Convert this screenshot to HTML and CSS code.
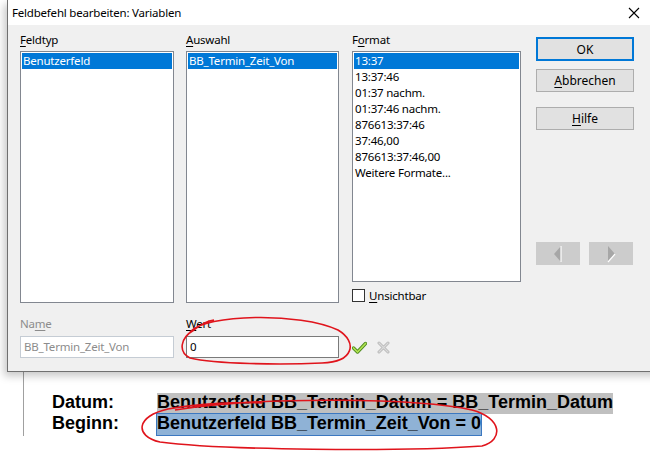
FILE: index.html
```html
<!DOCTYPE html>
<html lang="de">
<head>
    <meta charset="UTF-8">
    <title>Feldbefehl bearbeiten: Variablen</title>
    <link rel="stylesheet" href="styles.css">
</head>
<body>
    <div class="dialog">
        <div class="titlebar">
            <span class="title">Feldbefehl bearbeiten: Variablen</span>
            <svg class="close" width="12" height="12" viewBox="0 0 12 12">
                <path d="M1 1 L11 11 M11 1 L1 11" stroke="#000" stroke-width="1.1"/>
            </svg>
        </div>

        <div class="dialog-body">
            <div class="top-row">
                <div class="col col-type">
                    <div class="label"><u>F</u>eldtyp</div>
                    <div class="listbox tall">
                        <div class="item selected">Benutzerfeld</div>
                    </div>
                </div>
                <div class="col col-select">
                    <div class="label"><u>A</u>uswahl</div>
                    <div class="listbox tall">
                        <div class="item selected">BB_Termin_Zeit_Von</div>
                    </div>
                </div>
                <div class="col col-format">
                    <div class="label">F<u>o</u>rmat</div>
                    <div class="listbox short">
                        <div class="item selected">13:37</div>
                        <div class="item">13:37:46</div>
                        <div class="item">01:37 nachm.</div>
                        <div class="item">01:37:46 nachm.</div>
                        <div class="item">876613:37:46</div>
                        <div class="item">37:46,00</div>
                        <div class="item">876613:37:46,00</div>
                        <div class="item">Weitere Formate...</div>
                    </div>
                    <label class="check-row">
                        <span class="checkbox"></span>
                        <span><u>U</u>nsichtbar</span>
                    </label>
                </div>
                <div class="col col-buttons">
                    <button class="btn default">OK</button>
                    <button class="btn btn-cancel"><u>A</u>bbrechen</button>
                    <button class="btn btn-help"><u>H</u>ilfe</button>
                    <div class="nav">
                        <button class="nav-btn">
                            <svg width="10" height="18" viewBox="0 0 10 18">
                                <path d="M8 1 L1 9 L8 17 Z" fill="#a6a6a6"/>
                                <path d="M8 1 L8 17" stroke="#fff" stroke-width="1.2"/>
                            </svg>
                        </button>
                        <button class="nav-btn">
                            <svg width="10" height="18" viewBox="0 0 10 18">
                                <path d="M2 1 L9 9 L2 17 Z" fill="#a6a6a6"/>
                                <path d="M9 9 L2 17" stroke="#fff" stroke-width="1.2"/>
                            </svg>
                        </button>
                    </div>
                </div>
            </div>

            <div class="bottom-row">
                <div class="col col-type">
                    <div class="label disabled">Na<u>m</u>e</div>
                    <div class="input disabled">BB_Termin_Zeit_Von</div>
                </div>
                <div class="col col-select">
                    <div class="label"><u>W</u>ert</div>
                    <div class="input">0</div>
                </div>
                <div class="actions">
                    <svg width="15" height="13" viewBox="0 0 15 13">
                        <path d="M1.5 7 L5.5 11 L13.5 2.5" fill="none" stroke="#4d8a1f" stroke-width="3.4" stroke-linejoin="round" stroke-linecap="round"/>
                        <path d="M1.5 7 L5.5 11 L13.5 2.5" fill="none" stroke="#b2e352" stroke-width="1.7" stroke-linejoin="round" stroke-linecap="round"/>
                    </svg>
                    <svg width="13" height="13" viewBox="0 0 13 13">
                        <path d="M2 2 L11 11 M11 2 L2 11" stroke="#b8b8b8" stroke-width="3" stroke-linecap="round"/>
                        <path d="M2 2 L11 11 M11 2 L2 11" stroke="#dadada" stroke-width="1.2" stroke-linecap="round"/>
                    </svg>
                </div>
            </div>
        </div>
    </div>

    <div class="document">
        <div class="doc-line">
            <span class="doc-key">Datum:</span>
            <span class="field">Benutzerfeld BB_Termin_Datum = BB_Termin_Datum</span>
        </div>
        <div class="doc-line">
            <span class="doc-key">Beginn:</span>
            <span class="field chosen">Benutzerfeld BB_Termin_Zeit_Von = 0</span>
        </div>
    </div>

    <!-- red hand-drawn marks over the screenshot -->
    <svg class="marks" width="650" height="453" viewBox="0 0 650 453">
        <path d="M190 332 C205 314 300 312 338 330 C358 342 354 362 322 363 C280 365 215 364 190 358 C178 352 180 338 194 330 C200 325 206 321 214 320"
              fill="none" stroke="#e0141c" stroke-width="1.6"/>
        <path d="M175 410 C260 396 420 398 472 410 C502 418 504 440 482 446 C400 452 220 450 160 442 C134 436 136 416 168 409 C200 403 240 402 262 403"
              fill="none" stroke="#e0141c" stroke-width="1.6"/>
    </svg>
</body>
</html>
```

FILE: styles.css
```css
* {
    box-sizing: border-box;
}

body {
    margin: 0;
    width: 650px;
    height: 453px;
    overflow: hidden;
    position: relative;
    background: #ffffff;
    font-family: "Noto Sans", sans-serif;
    font-size: 11.5px;
    letter-spacing: -0.2px;
    color: #000;
}

u {
    text-decoration: underline;
    text-underline-offset: 2px;
}

.dialog {
    margin-left: 7px;
    width: 670px;
    background: #f0f0f0;
    border-left: 1px solid #707070;
    border-bottom: 1px solid #707070;
    box-shadow: -3px 4px 8px rgba(0, 0, 0, 0.22);
    position: relative;
    z-index: 1;
}

.titlebar {
    height: 25px;
    background: #ffffff;
    display: flex;
    align-items: center;
    padding-left: 4px;
    font-size: 11.5px;
}

.title {
    flex: 1;
}

.close {
    margin-right: 37px;
    margin-top: 1px;
}

.dialog-body {
    padding: 7px 0 13px 12px;
}

.top-row,
.bottom-row {
    display: flex;
    align-items: flex-start;
}

.col-type { width: 154px; margin-right: 12px; }
.col-select { width: 153px; margin-right: 13px; }
.col-format { width: 169px; margin-right: 15px; }
.col-buttons { width: 98px; }

.label {
    line-height: 16px;
    height: 16px;
    margin-bottom: 3px;
}

.label.disabled {
    color: #8c8c8c;
}

.listbox {
    background: #ffffff;
    border: 1px solid #828790;
    padding: 1px;
}

.listbox.tall { height: 252px; }
.listbox.short { height: 231px; }

.item {
    height: 16px;
    line-height: 16px;
    padding-left: 1px;
    white-space: nowrap;
}

.item.selected {
    background: #0078d7;
    color: #ffffff;
}

.check-row {
    display: flex;
    align-items: center;
    gap: 4px;
    margin-top: 6px;
    height: 14px;
}

.checkbox {
    width: 13px;
    height: 13px;
    border: 1px solid #333333;
    background: #ffffff;
}

.btn {
    display: block;
    width: 98px;
    height: 23px;
    background: #e1e1e1;
    border: 1px solid #adadad;
    font: inherit;
    font-size: 12px;
    color: #000;
    padding: 0;
}

.btn.default {
    height: 24px;
    margin-top: 5px;
    border: 2px solid #0078d7;
}

.btn-cancel { margin-top: 8px; }
.btn-help { margin-top: 15px; }

.nav {
    display: flex;
    gap: 9px;
    margin-top: 112px;
}

.nav-btn {
    width: 44px;
    height: 23px;
    background: #cccccc;
    border: none;
    padding: 0;
    display: flex;
    align-items: center;
    justify-content: center;
}

.bottom-row {
    margin-top: 13px;
}

.bottom-row .label {
    margin-bottom: 4px;
}

.input {
    height: 22px;
    background: #ffffff;
    border: 1px solid #7a7a7a;
    line-height: 20px;
    padding-left: 3px;
}

.input.disabled {
    border-color: #c5ccd4;
    color: #8c8c8c;
}

.actions {
    display: flex;
    align-items: center;
    gap: 10px;
    margin-top: 25px;
}

.document {
    margin-left: 23px;
    border-left: 1px solid #a0a0a0;
    height: 64px;
    padding: 21px 0 0 28px;
    font-family: "Liberation Sans", Arial, sans-serif;
    font-weight: bold;
    font-size: 18px;
    letter-spacing: 0;
}

.doc-line {
    display: flex;
    height: 21px;
    line-height: 19px;
}

.doc-key {
    width: 105px;
}

.field {
    background: #c0c0c0;
}

.field.chosen {
    background: #8fb2d6;
    outline: 1px solid #3c78c0;
}

.marks {
    position: absolute;
    left: 0;
    top: 0;
    z-index: 2;
    pointer-events: none;
}
```
